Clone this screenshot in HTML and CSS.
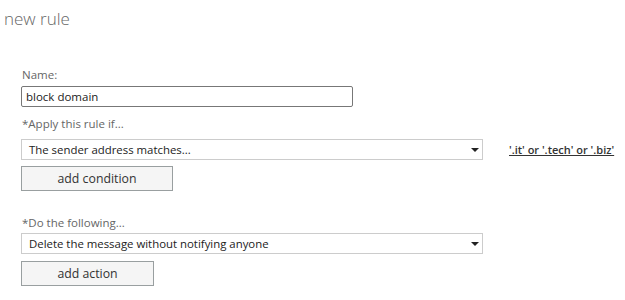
FILE: index.html
```html
<!DOCTYPE html>
<html lang="en">

<head>
    <meta charset="UTF-8">
    <title>new rule</title>
    <link rel="stylesheet" href="styles.css">
</head>

<body>

    <h1 class="title">new rule</h1>

    <div class="form">
        <label class="field-label" for="name">Name:</label>
        <input class="text-input" type="text" id="name" value="block domain">

        <div class="field-label apply-label">*Apply this rule if...</div>
        <div class="row">
            <div class="dropdown wide">
                <span>The sender address matches...</span>
                <span class="arrow"></span>
            </div>
            <a class="rule-link" href="#">'.it' or '.tech' or '.biz'</a>
        </div>
        <button class="add-button condition">add condition</button>

        <div class="field-label do-label">*Do the following...</div>
        <div class="dropdown wide">
            <span>Delete the message without notifying anyone</span>
            <span class="arrow"></span>
        </div>
        <button class="add-button action">add action</button>
    </div>

</body>

</html>
```

FILE: styles.css
```css
body {
    font-family: "Open Sans", "Noto Sans", sans-serif;
    margin: 0;
    padding: 0;
    background-color: white;
    color: #333;
}

.title {
    margin: 0;
    padding: 7px 0 0 4px;
    font-size: 17px;
    font-weight: 300;
    color: #666;
    line-height: 24px;
}

.form {
    padding: 36px 0 0 21px;
}

.field-label {
    display: block;
    font-size: 11.5px;
    color: #666;
    line-height: 16px;
    padding-left: 1px;
}

.text-input {
    display: block;
    box-sizing: border-box;
    width: 332px;
    height: 21px;
    margin-top: 3px;
    padding: 0 4px;
    border: 1px solid #777;
    border-radius: 2px;
    font-family: inherit;
    font-size: 11.5px;
    color: #222;
    outline: none;
}

.apply-label {
    margin-top: 9px;
}

/* condition select + link side by side */
.row {
    display: flex;
    align-items: center;
    margin-top: 7px;
}

.dropdown {
    box-sizing: border-box;
    height: 21px;
    display: flex;
    align-items: center;
    justify-content: space-between;
    padding: 0 3px 0 7px;
    border: 1px solid #ccc;
    font-size: 11.4px;
    color: #222;
}

.wide {
    width: 462px;
}

.arrow {
    width: 0;
    height: 0;
    border-left: 4px solid transparent;
    border-right: 4px solid transparent;
    border-top: 4px solid #222;
}

.rule-link {
    margin-left: 26px;
    font-size: 11px;
    font-weight: 600;
    color: #333;
    text-decoration: underline;
}

.add-button {
    display: block;
    box-sizing: border-box;
    height: 25px;
    margin-top: 6px;
    border: 1px solid #999fa0;
    background: #f5f5f5;
    font-family: inherit;
    font-size: 12.3px;
    color: #333;
    cursor: pointer;
}

.condition {
    width: 152px;
}

.action {
    width: 133px;
    margin-top: 7px;
}

.do-label {
    margin-top: 24px;
    margin-bottom: 2px;
}
```
